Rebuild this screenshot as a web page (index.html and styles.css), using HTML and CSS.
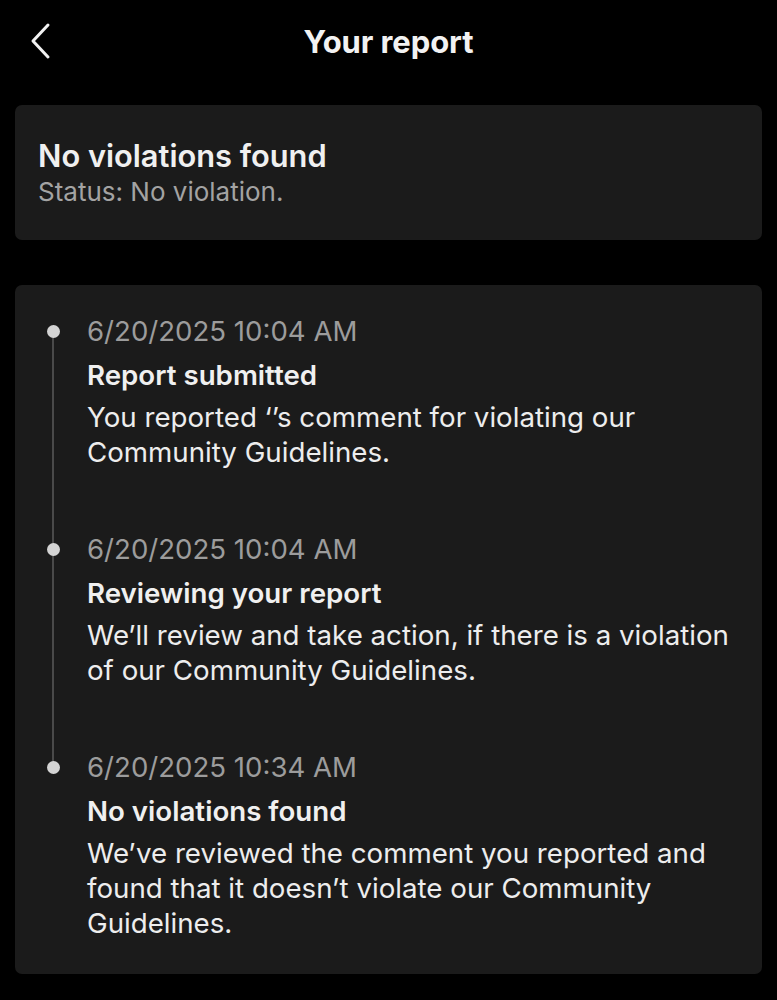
FILE: index.html
```html
<!DOCTYPE html>
<html lang="en">
<head>
    <meta charset="utf-8">
    <title>Your report</title>
    <meta name="viewport" content="width=device-width, initial-scale=1">
    <link rel="stylesheet" href="styles.css">
</head>
<body>
    <header class="topbar">
        <button class="back-btn" type="button" aria-label="Back">
            <svg width="22" height="38" viewBox="0 0 22 38">
                <path d="M18 3 L3 19 L18 35" fill="none" stroke="#f2f2f2" stroke-width="3" stroke-linecap="round" stroke-linejoin="round"/>
            </svg>
        </button>
        <h1 class="page-title">Your report</h1>
    </header>

    <section class="card summary">
        <h2 class="summary-title">No violations found</h2>
        <p class="summary-status">Status: No violation.</p>
    </section>

    <section class="card timeline">
        <div class="step">
            <span class="dot"></span>
            <div class="step-body">
                <p class="step-date">6/20/2025 10:04 AM</p>
                <h3 class="step-title">Report submitted</h3>
                <p class="step-text">You reported ‘’s comment for violating our Community Guidelines.</p>
            </div>
        </div>
        <div class="step">
            <span class="dot"></span>
            <div class="step-body">
                <p class="step-date">6/20/2025 10:04 AM</p>
                <h3 class="step-title">Reviewing your report</h3>
                <p class="step-text">We’ll review and take action, if there is a violation of our Community Guidelines.</p>
            </div>
        </div>
        <div class="step">
            <span class="dot"></span>
            <div class="step-body">
                <p class="step-date">6/20/2025 10:34 AM</p>
                <h3 class="step-title">No violations found</h3>
                <p class="step-text">We’ve reviewed the comment you reported and found that it doesn’t violate our Community Guidelines.</p>
            </div>
        </div>
    </section>
</body>
</html>
```

FILE: styles.css
```css
* {
    margin: 0;
    padding: 0;
    box-sizing: border-box;
}

body {
    font-family: Inter, 'Noto Sans', sans-serif;
    background: #000;
    color: #f0f0f0;
    padding: 0 15px 20px;
}

.topbar {
    height: 83px;
    display: flex;
    align-items: center;
    justify-content: center;
    position: relative;
}

.back-btn {
    position: absolute;
    left: 15px;
    top: 22px;
    background: none;
    border: none;
    display: flex;
}

.page-title {
    font-size: 31px;
    font-weight: 700;
    color: #f2f2f2;
    letter-spacing: -0.1px;
}

.card {
    background: #1b1b1b;
    border-radius: 7px;
}

.summary {
    margin-top: 22px;
    padding: 33px 24px 32px 23px;
}

.summary-title {
    font-size: 30.8px;
    font-weight: 600;
    line-height: 36px;
    margin-bottom: 2px;
}

.summary-status {
    font-size: 26px;
    line-height: 32px;
    color: #a3a3a3;
}

.timeline {
    margin-top: 45px;
    padding: 28px 20px 33px 23px;
    display: flex;
    flex-direction: column;
    gap: 61px;
}

.step {
    display: grid;
    grid-template-columns: 30px 1fr;
    column-gap: 19px;
    position: relative;
}

.step:not(:last-child)::before {
    content: "";
    position: absolute;
    left: 14px;
    top: 18px;
    bottom: -79px;
    width: 2px;
    background: #4a4a4a;
}

.dot {
    width: 13px;
    height: 13px;
    border-radius: 50%;
    background: #d4d4d4;
    justify-self: center;
    margin-top: 12px;
    position: relative;
    z-index: 1;
}

.step-date {
    font-size: 27.6px;
    line-height: 36px;
    color: #9c9c9c;
    margin-bottom: 8px;
}

.step-title {
    font-size: 27.7px;
    font-weight: 600;
    line-height: 36px;
    margin-bottom: 7px;
}

.step-text {
    font-size: 27.7px;
    line-height: 35px;
    color: #ededed;
}
```
